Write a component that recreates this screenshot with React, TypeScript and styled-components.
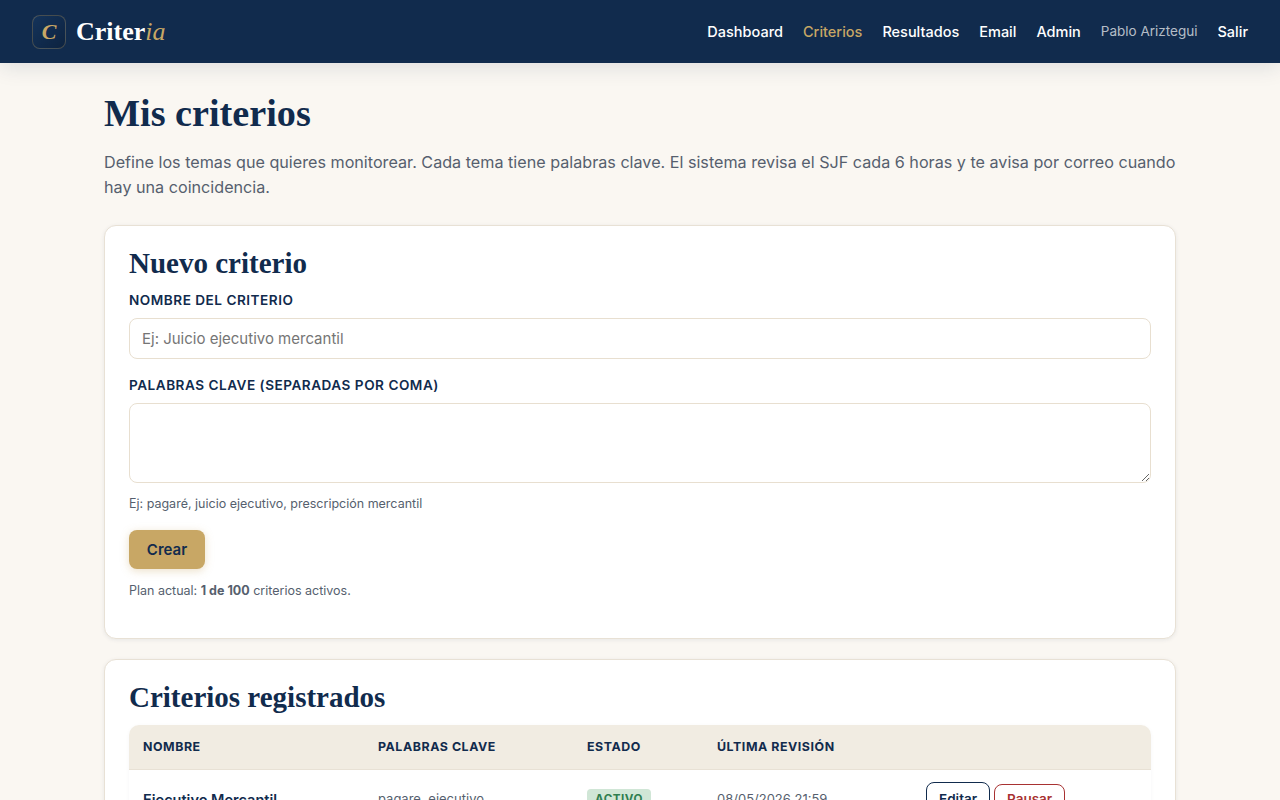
import React from 'react';
import styled, { createGlobalStyle } from 'styled-components';

const navy = '#112b4d';
const gold = '#c8a765';
const serif = '"Liberation Serif", "DejaVu Serif", serif';

const GlobalStyle = createGlobalStyle`
  * {
    box-sizing: border-box;
  }
  body {
    margin: 0;
    background: #faf7f2;
    color: ${navy};
    font-family: Inter, "Liberation Sans", sans-serif;
  }
`;

const Header = styled.header`
  height: 63px;
  padding: 0 32px;
  background: ${navy};
  display: flex;
  align-items: center;
  justify-content: space-between;
  box-shadow: 0 4px 20px rgba(17, 43, 77, 0.12);
`;

const Brand = styled.div`
  display: flex;
  align-items: center;
  gap: 10px;
`;

const LogoMark = styled.div`
  width: 34px;
  height: 34px;
  border-radius: 8px;
  border: 1px solid rgba(200, 167, 101, 0.3);
  background: linear-gradient(135deg, #14335a, #0d2340);
  color: ${gold};
  font-family: ${serif};
  font-style: italic;
  font-weight: 700;
  font-size: 22px;
  display: flex;
  align-items: center;
  justify-content: center;
`;

const BrandName = styled.div`
  font-family: ${serif};
  font-weight: 700;
  font-size: 26px;
  color: #fff;

  em {
    color: ${gold};
    font-weight: 400;
    font-style: italic;
  }
`;

const Nav = styled.nav`
  display: flex;
  align-items: center;
  gap: 20px;
`;

const NavLink = styled.a<{ $active?: boolean }>`
  font-size: 14.5px;
  font-weight: 500;
  color: ${(p) => (p.$active ? gold : '#fff')};
`;

const UserName = styled.span`
  font-size: 13.5px;
  color: rgba(255, 255, 255, 0.7);
  margin-bottom: 2px;
`;

const Main = styled.main`
  width: 1072px;
  margin: 0 auto;
  padding: 32px 0;
`;

const Title = styled.h1`
  margin: 0 0 19px;
  font-family: ${serif};
  font-size: 38.2px;
  line-height: 36px;
  font-weight: 700;
  color: ${navy};
`;

const Intro = styled.p`
  margin: 0 0 25px;
  font-size: 16.16px;
  line-height: 25px;
  color: #565f6e;
`;

const Card = styled.section`
  background: #fff;
  border: 1px solid #e8e1d5;
  border-radius: 12px;
  padding: 24px;
  margin-bottom: 20px;
  box-shadow: 0 1px 4px rgba(17, 43, 77, 0.08);
`;

const CardTitle = styled.h2<{ $gap: number }>`
  margin: 0 0 ${(p) => p.$gap}px;
  font-family: ${serif};
  font-size: 29px;
  line-height: 26px;
  font-weight: 700;
  color: ${navy};
`;

const Label = styled.label`
  display: block;
  margin-bottom: 9px;
  font-size: 13.6px;
  line-height: 17px;
  font-weight: 600;
  letter-spacing: 0.5px;
  text-transform: uppercase;
  color: ${navy};
`;

const TextInput = styled.input`
  display: block;
  width: 100%;
  height: 41px;
  padding: 0 12px;
  margin-bottom: 18px;
  background: #fff;
  border: 1px solid #e8dfd0;
  border-radius: 8px;
  font: 400 15px Inter, sans-serif;
  color: ${navy};

  &::placeholder {
    color: #757575;
  }
`;

const TextArea = styled.textarea`
  display: block;
  width: 100%;
  height: 80px;
  padding: 12px;
  margin-bottom: 13px;
  background: #fff;
  border: 1px solid #e8dfd0;
  border-radius: 8px;
  font: 400 15px Inter, sans-serif;
`;

const Hint = styled.p<{ $gap: number }>`
  margin: 0 0 ${(p) => p.$gap}px;
  font-size: 12.5px;
  line-height: 16px;
  color: #565f6e;

  strong {
    font-weight: 700;
  }
`;

const PrimaryButton = styled.button`
  display: block;
  width: 76px;
  height: 39px;
  margin-bottom: 14px;
  border: 0;
  border-radius: 8px;
  background: ${gold};
  color: ${navy};
  font: 600 15px Inter, sans-serif;
  box-shadow: 0 2px 8px rgba(200, 167, 101, 0.35);
`;

const TableWrap = styled.div`
  border-radius: 10px 10px 0 0;
  overflow: hidden;
  box-shadow: 0 1px 4px rgba(17, 43, 77, 0.04);
`;

const Table = styled.table`
  width: 100%;
  table-layout: fixed;
  border-collapse: collapse;
`;

const Th = styled.th<{ $width?: number }>`
  width: ${(p) => (p.$width ? `${p.$width}px` : 'auto')};
  height: 44px;
  padding: 0 14px;
  background: #f1ece2;
  border-bottom: 1px solid #e8e1d5;
  text-align: left;
  font-size: 12.4px;
  font-weight: 700;
  letter-spacing: 0.55px;
  text-transform: uppercase;
  color: ${navy};
`;

const Td = styled.td<{ $strong?: boolean }>`
  padding: 12px 14px;
  font-size: ${(p) => (p.$strong ? 14.5 : 13)}px;
  font-weight: ${(p) => (p.$strong ? 600 : 400)};
  color: ${(p) => (p.$strong ? navy : '#565f6e')};
  border-bottom: 1px solid #f1ece2;
`;

const Badge = styled.span`
  display: inline-block;
  padding: 3px 8px;
  border-radius: 4px;
  background: #d0e6d6;
  color: #2f7d4f;
  font-size: 11.6px;
  font-weight: 700;
  letter-spacing: 0.5px;
`;

const Actions = styled.div`
  display: flex;
  align-items: center;
  gap: 4px;
`;

const SmallButton = styled.button<{ $danger?: boolean }>`
  height: ${(p) => (p.$danger ? 31 : 35)}px;
  padding: 0 12px;
  background: #fff;
  border: 1px solid ${(p) => (p.$danger ? '#a83232' : navy)};
  border-radius: 8px;
  color: ${(p) => (p.$danger ? '#a83232' : navy)};
  font: 600 13.5px Inter, sans-serif;
`;

export default function App() {
  return (
    <>
      <GlobalStyle />
      <Header>
        <Brand>
          <LogoMark>C</LogoMark>
          <BrandName>
            Criter<em>ia</em>
          </BrandName>
        </Brand>
        <Nav>
          <NavLink>Dashboard</NavLink>
          <NavLink $active>Criterios</NavLink>
          <NavLink>Resultados</NavLink>
          <NavLink>Email</NavLink>
          <NavLink>Admin</NavLink>
          <UserName>Pablo Ariztegui</UserName>
          <NavLink>Salir</NavLink>
        </Nav>
      </Header>
      <Main>
        <Title>Mis criterios</Title>
        <Intro>
          Define los temas que quieres monitorear. Cada tema tiene palabras clave. El sistema revisa el SJF cada 6
          horas y te avisa por correo cuando hay una coincidencia.
        </Intro>
        <Card>
          <CardTitle $gap={16}>Nuevo criterio</CardTitle>
          <Label>Nombre del criterio</Label>
          <TextInput placeholder="Ej: Juicio ejecutivo mercantil" />
          <Label>Palabras clave (separadas por coma)</Label>
          <TextArea />
          <Hint $gap={18}>Ej: pagaré, juicio ejecutivo, prescripción mercantil</Hint>
          <PrimaryButton>Crear</PrimaryButton>
          <Hint $gap={15}>
            Plan actual: <strong>1 de 100</strong> criterios activos.
          </Hint>
        </Card>
        <Card>
          <CardTitle $gap={15}>Criterios registrados</CardTitle>
          <TableWrap>
            <Table>
              <thead>
                <tr>
                  <Th $width={235}>Nombre</Th>
                  <Th $width={209}>Palabras clave</Th>
                  <Th $width={130}>Estado</Th>
                  <Th $width={209}>Última revisión</Th>
                  <Th />
                </tr>
              </thead>
              <tbody>
                <tr>
                  <Td $strong>Ejecutivo Mercantil</Td>
                  <Td>pagare, ejecutivo</Td>
                  <Td>
                    <Badge>ACTIVO</Badge>
                  </Td>
                  <Td>08/05/2026 21:59</Td>
                  <Td>
                    <Actions>
                      <SmallButton>Editar</SmallButton>
                      <SmallButton $danger>Pausar</SmallButton>
                    </Actions>
                  </Td>
                </tr>
              </tbody>
            </Table>
          </TableWrap>
        </Card>
      </Main>
    </>
  );
}
